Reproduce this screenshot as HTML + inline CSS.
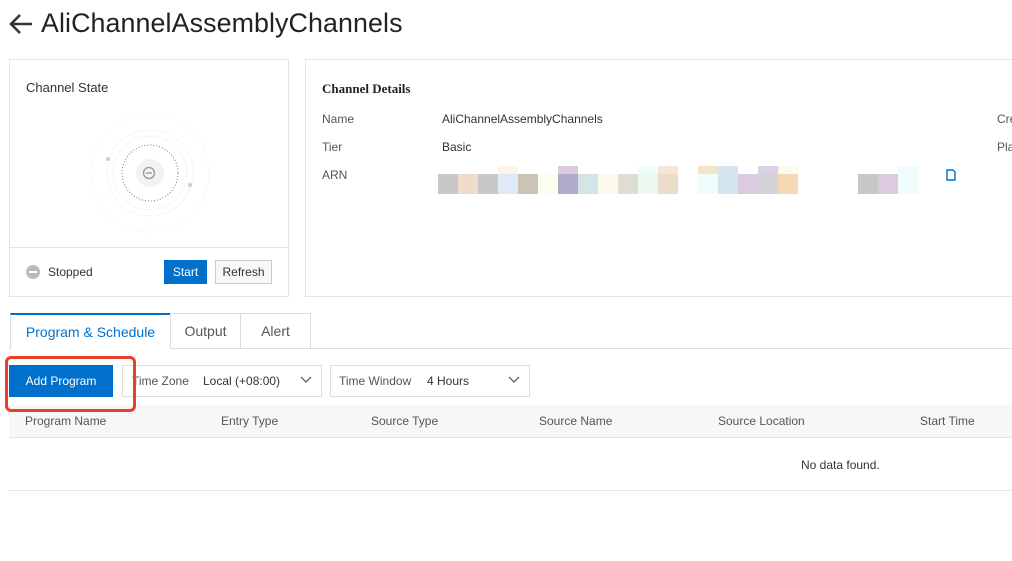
<!DOCTYPE html>
<html><head><meta charset="utf-8">
<style>
*{box-sizing:border-box;margin:0;padding:0}
body{width:1012px;height:561px;background:#fff;font-family:"Liberation Sans",sans-serif;color:#333;position:relative;overflow:hidden;font-size:12px}
.abs{position:absolute}
.card{position:absolute;border:1px solid #e5e5e5;background:#fff}
.lbl{position:absolute;font-size:12px;color:#555}
.btn{position:absolute;font-size:12px;text-align:center}
.th{position:absolute;top:414px;font-size:12px;color:#555}
</style></head><body>
<svg class="abs" style="left:8px;top:12px" width="26" height="24" viewBox="0 0 26 24"><path d="M24 12H4M12 3L3 12l9 9" fill="none" stroke="#333" stroke-width="2.6"/></svg>
<div class="abs" style="left:41px;top:8px;font-size:26.8px;color:#222;letter-spacing:0.1px">AliChannelAssemblyChannels</div>

<div class="card" style="left:9px;top:59px;width:280px;height:238px"></div>
<div class="abs" style="left:26px;top:80px;font-size:13px;color:#333">Channel State</div>
<svg class="abs" style="left:85px;top:110px" width="130" height="130" viewBox="0 0 130 130">
<circle cx="65" cy="63" r="59" fill="none" stroke="#eee" stroke-dasharray="1 2"/>
<circle cx="65" cy="63" r="43" fill="none" stroke="#e4e4e4" stroke-dasharray="1 2"/>
<circle cx="65" cy="63" r="37" fill="none" stroke="#e0e0e0" stroke-dasharray="1 2"/>
<circle cx="65" cy="63" r="28" fill="none" stroke="#777" stroke-dasharray="1 2"/>
<circle cx="65" cy="63" r="14" fill="#f2f2f2"/>
<circle cx="64" cy="63" r="5.5" fill="none" stroke="#999" stroke-width="1.3"/>
<path d="M61 63h6" stroke="#999" stroke-width="1.3"/>
<circle cx="23" cy="49" r="2" fill="#ccc"/><circle cx="105" cy="75" r="2" fill="#ccc"/>
</svg>
<div class="abs" style="left:10px;top:247px;width:278px;border-top:1px solid #e5e5e5"></div>
<div class="abs" style="left:26px;top:265px;width:14px;height:14px;border-radius:50%;background:#bbb"></div>
<div class="abs" style="left:29px;top:271px;width:8px;height:2px;background:#fff"></div>
<div class="abs" style="left:48px;top:265px;font-size:12px">Stopped</div>
<div class="btn" style="left:164px;top:260px;width:43px;height:24px;background:#0070cc;color:#fff;line-height:24px">Start</div>
<div class="btn" style="left:215px;top:260px;width:57px;height:24px;border:1px solid #ccc;background:#f7f7f7;line-height:22px">Refresh</div>

<div class="card" style="left:305px;top:59px;width:720px;height:238px"></div>
<div class="abs" style="left:322px;top:81px;font-family:'Liberation Serif',serif;font-weight:bold;font-size:13px;color:#222">Channel Details</div>
<div class="lbl" style="left:322px;top:112px">Name</div>
<div class="lbl" style="left:442px;top:112px;color:#333">AliChannelAssemblyChannels</div>
<div class="lbl" style="left:322px;top:140px">Tier</div>
<div class="lbl" style="left:442px;top:140px;color:#333">Basic</div>
<div class="lbl" style="left:322px;top:168px">ARN</div>
<div class="lbl" style="left:997px;top:112px">Cre</div>
<div class="lbl" style="left:997px;top:140px">Pla</div>
<svg class="abs" style="left:438px;top:166px" width="500" height="28">
<g>
<rect x="60" y="0" width="20" height="8" fill="#fdf5e6"/><rect x="120" y="0" width="20" height="8" fill="#dccbdf"/>
<rect x="200" y="0" width="20" height="8" fill="#eefcfc"/><rect x="220" y="0" width="20" height="8" fill="#f5e6d6"/>
<rect x="260" y="0" width="20" height="8" fill="#f5e3c8"/><rect x="280" y="0" width="20" height="8" fill="#d4e5ef"/>
<rect x="320" y="0" width="20" height="8" fill="#d8d4e6"/><rect x="340" y="0" width="20" height="8" fill="#fcfcec"/>
<rect x="460" y="0" width="20" height="8" fill="#f0fcfc"/>
<rect x="0" y="8" width="20" height="20" fill="#c8c8c8"/><rect x="20" y="8" width="20" height="20" fill="#eddccc"/>
<rect x="40" y="8" width="20" height="20" fill="#c8c8c8"/><rect x="60" y="8" width="20" height="20" fill="#deebf7"/>
<rect x="80" y="8" width="20" height="20" fill="#cbc4b5"/><rect x="100" y="8" width="20" height="20" fill="#fcfcef"/>
<rect x="120" y="8" width="20" height="20" fill="#aeabcb"/><rect x="140" y="8" width="20" height="20" fill="#d4e5e8"/>
<rect x="160" y="8" width="20" height="20" fill="#fafaec"/><rect x="180" y="8" width="20" height="20" fill="#dfddd2"/>
<rect x="200" y="8" width="20" height="20" fill="#edfaf2"/><rect x="220" y="8" width="20" height="20" fill="#ebdccb"/>
<rect x="260" y="8" width="20" height="20" fill="#effcfb"/><rect x="280" y="8" width="20" height="20" fill="#d4e5ef"/>
<rect x="300" y="8" width="20" height="20" fill="#dccbdf"/><rect x="320" y="8" width="20" height="20" fill="#d4d4d8"/>
<rect x="340" y="8" width="20" height="20" fill="#f5d9b4"/>
<rect x="420" y="8" width="20" height="20" fill="#c8c8c8"/><rect x="440" y="8" width="20" height="20" fill="#dccbdf"/>
<rect x="460" y="8" width="20" height="20" fill="#edfcfc"/>
</g></svg>
<svg class="abs" style="left:944px;top:168px" width="14" height="14" viewBox="0 0 14 14"><path d="M3 2h6l2 2v8H3z" fill="none" stroke="#0070cc" stroke-width="1.4"/></svg>

<div class="abs" style="left:9px;top:348px;width:1003px;border-top:1px solid #ddd"></div>
<div class="abs" style="left:10px;top:313px;width:161px;height:36px;border:1px solid #ddd;border-top:2px solid #0070cc;border-bottom:none;background:#fff;color:#0070cc;font-size:14px;text-align:center;line-height:34px">Program &amp; Schedule</div>
<div class="abs" style="left:170px;top:313px;width:71px;height:35px;border:1px solid #ddd;border-bottom:none;font-size:14px;color:#555;text-align:center;line-height:35px">Output</div>
<div class="abs" style="left:240px;top:313px;width:71px;height:35px;border:1px solid #ddd;border-bottom:none;font-size:14px;color:#555;text-align:center;line-height:35px">Alert</div>

<div class="btn" style="left:9px;top:365px;width:104px;height:32px;background:#0070cc;color:#fff;line-height:32px;font-size:12px">Add Program</div>
<div class="abs" style="left:122px;top:365px;width:200px;height:32px;border:1px solid #ddd"></div>
<div class="abs" style="left:132px;top:374px;color:#555">Time Zone</div>
<div class="abs" style="left:203px;top:374px;color:#333">Local (+08:00)</div>
<svg class="abs" style="left:300px;top:376px" width="12" height="8"><path d="M1 1l5 5 5-5" fill="none" stroke="#666" stroke-width="1.3"/></svg>
<div class="abs" style="left:330px;top:365px;width:200px;height:32px;border:1px solid #ddd"></div>
<div class="abs" style="left:339px;top:374px;color:#555">Time Window</div>
<div class="abs" style="left:427px;top:374px;color:#333">4 Hours</div>
<svg class="abs" style="left:508px;top:376px" width="12" height="8"><path d="M1 1l5 5 5-5" fill="none" stroke="#666" stroke-width="1.3"/></svg>

<div class="abs" style="left:9px;top:405px;width:1003px;height:33px;background:#f7f7f7;border-bottom:1px solid #e5e5e5"></div>
<div class="th" style="left:25px">Program Name</div>
<div class="th" style="left:221px">Entry Type</div>
<div class="th" style="left:371px">Source Type</div>
<div class="th" style="left:539px">Source Name</div>
<div class="th" style="left:718px">Source Location</div>
<div class="th" style="left:920px">Start Time</div>
<div class="abs" style="left:801px;top:458px;color:#333">No data found.</div>
<div class="abs" style="left:9px;top:490px;width:1003px;border-top:1px solid #e5e5e5"></div>
<div class="abs" style="left:5px;top:356px;width:131px;height:56px;border:3px solid #e8402a;border-radius:6px;z-index:5"></div>
</body></html>
